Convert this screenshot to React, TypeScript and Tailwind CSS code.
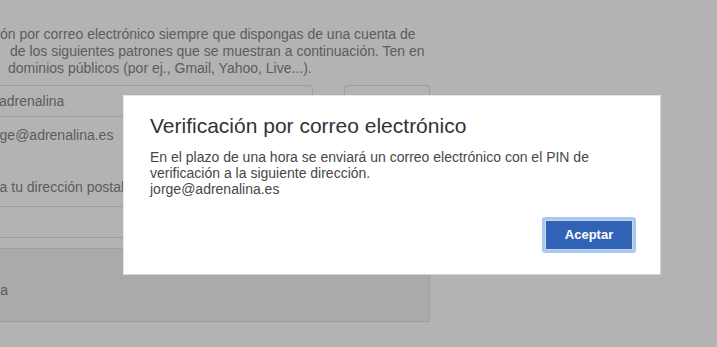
export default function App() {
  return (
    <div
      className="relative w-[717px] h-[347px] overflow-hidden bg-[#b3b3b3] text-[14px] text-[#5c5c5c]"
      style={{ fontFamily: '"Liberation Sans", Arial, sans-serif' }}
    >
      {/* background page, dimmed */}
      <div className="pt-[26px] leading-[17px]">
        <div className="whitespace-nowrap">ón por correo electrónico siempre que dispongas de una cuenta de</div>
        <div className="whitespace-nowrap pl-[10px]">de los siguientes patrones que se muestran a continuación. Ten en</div>
        <div className="whitespace-nowrap pl-[8px]">dominios públicos (por ej., Gmail, Yahoo, Live...).</div>
      </div>

      <div className="mt-[8px] flex">
        <div className="w-[313px] h-[31px] rounded-tr-[4px] border-t border-r border-[#9c9c9c] flex items-center overflow-hidden">
          <span className="whitespace-nowrap -ml-px">adrenalina</span>
        </div>
        <div className="ml-[31px] w-[86px] h-[31px] rounded-t-[4px] border-t border-x border-[#9c9c9c]" />
      </div>
      <div className="w-[123px] border-t border-[#9c9c9c]" />

      <div className="h-[89px] w-[123px] pt-[10px] leading-[17px] overflow-hidden">
        <div className="whitespace-nowrap -ml-[16px]">jorge@adrenalina.es</div>
        <div className="mt-[35px] whitespace-nowrap -ml-[30px]">Indica tu dirección postal</div>
      </div>
      <div className="w-[123px] h-[31px] border-t border-[#9c9c9c]" />
      <div className="w-[123px] h-[11px] border-t border-[#9c9c9c]" />

      <div className="w-[430px] h-[74px] bg-[#aaaaaa] border-y border-r border-[#9e9e9e] flex items-center overflow-hidden">
        <span className="whitespace-nowrap -ml-[59px] pt-[10px]">Respuesta</span>
      </div>

      {/* modal */}
      <div className="absolute left-[123px] top-[95px] w-[538px] h-[180px] bg-white border border-[#d4d4d4] border-l-[#e6e6e6] border-t-[#e6e6e6] flex flex-col">
        <div className="pl-[26px] pt-[17px]">
          <h2 className="text-[21px] leading-[26px] text-[#333333]">Verificación por correo electrónico</h2>
          <p className="mt-[10px] text-[14px] leading-[16px] text-[#474747]">
            En el plazo de una hora se enviará un correo electrónico con el PIN de
            <br />
            verificación a la siguiente dirección.
            <br />
            jorge@adrenalina.es
          </p>
        </div>
        <div className="mt-auto mb-[21px] mr-[24px] flex justify-end">
          <button className="w-[94px] h-[36px] rounded-[3px] bg-[#a9c8ec] p-[3px]">
            <span className="flex h-full w-full items-center justify-center border border-[#c6d8ef] bg-[#3062b6] text-[13px] font-bold text-white">
              Aceptar
            </span>
          </button>
        </div>
      </div>
    </div>
  );
}
